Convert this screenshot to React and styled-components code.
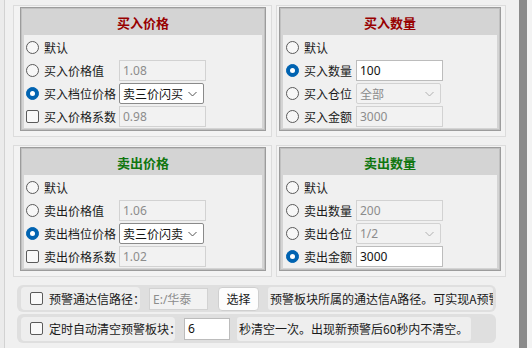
import React from 'react'
import styled, { createGlobalStyle } from 'styled-components'

const Global = createGlobalStyle`
    html, body {
        margin: 0;
        padding: 0;
        background: #f0f0f0;
        overflow: hidden;
    }
    * {
        box-sizing: border-box;
    }
`

const Window = styled.div`
    width: 532px;
    height: 348px;
    display: flex;
    background: #f0f0f0;
    font-family: 'Noto Sans CJK SC', 'Noto Sans', sans-serif;
    font-size: 12px;
    color: #1a1a1a;
`

const Edge = styled.div`
    width: 5px;
    background: #ebebeb;
    border-right: 1px solid #d2d2d2;
`

const Main = styled.div`
    width: 514px;
    padding: 5px 0 0 8px;
    display: flex;
    flex-direction: column;
`

const ScrollBar = styled.div`
    width: 8px;
    background: #8a8a8a;
`

const Tail = styled.div`
    flex: 1;
    background: #f3f3f3;
`

const Grid = styled.div`
    display: grid;
    grid-template-columns: 259px 230px;
    grid-template-rows: 132px 132px;
    column-gap: 4px;
    row-gap: 8px;
`

const Cell = styled.div`
    background: #f3f3f3;
    border: 1px solid #dcdcdc;
    padding: ${(p) => (p.$right ? '1px 4px 5px 2px' : '1px 5px 5px 6px')};
    display: flex;
`

const Group = styled.div`
    flex: 1;
    display: flex;
    flex-direction: column;
    background: #d4d4d4;
    border: 1px solid #9c9c9c;
    box-shadow: inset 0 0 0 1px #c0c0c0;
    padding: 1px;
`

const Header = styled.div`
    height: 26px;
    display: flex;
    align-items: center;
    justify-content: center;
    font-size: 13px;
    font-weight: bold;
    color: ${(p) => (p.$sell ? '#0f760f' : '#980000')};
`

const Content = styled.div`
    flex: 1;
    margin: 0 2px 1px 2px;
    background: #f0f0f0;
    padding-top: 1px;
    display: flex;
    flex-direction: column;
`

const Row = styled.div`
    height: 23px;
    display: flex;
    align-items: center;
    padding-left: ${(p) => (p.$right ? '3px' : '2px')};
`

const Radio = styled.span`
    width: 13px;
    height: 13px;
    border-radius: 50%;
    flex: none;
    border: 1px solid ${(p) => (p.$checked ? '#0063b1' : '#5a5a5a')};
    background: ${(p) => (p.$checked ? '#0063b1' : '#f7f7f7')};
    display: flex;
    align-items: center;
    justify-content: center;
    &::after {
        content: '';
        display: ${(p) => (p.$checked ? 'block' : 'none')};
        width: 5px;
        height: 5px;
        border-radius: 50%;
        background: #fff;
    }
`

const Check = styled.span`
    width: 13px;
    height: 13px;
    flex: none;
    border: 1px solid #5a5a5a;
    border-radius: 2px;
    background: #f9f9f9;
`

const Label = styled.span`
    margin-left: 5px;
    width: ${(p) => p.$w}px;
    white-space: nowrap;
`

const Field = styled.div`
    width: ${(p) => p.$w || 87}px;
    height: ${(p) => p.$h || 21}px;
    border: 1px solid ${(p) => (p.$disabled ? '#d2d2d2' : '#bcbcbc')};
    background: ${(p) => (p.$disabled ? '#f2f2f2' : '#ffffff')};
    color: ${(p) => (p.$disabled ? '#8c8c8c' : '#111')};
    display: flex;
    align-items: center;
    padding-left: 3px;
    font-family: 'Noto Sans', 'Noto Sans CJK SC', sans-serif;
    font-size: 12px;
`

const Select = styled.div`
    width: ${(p) => p.$w}px;
    height: 21px;
    border: 1px solid ${(p) => (p.$disabled ? '#d2d2d2' : '#8a8a8a')};
    border-radius: 2px;
    background: ${(p) => (p.$disabled ? '#f2f2f2' : '#ffffff')};
    color: ${(p) => (p.$disabled ? '#8c8c8c' : '#111')};
    display: flex;
    align-items: center;
    justify-content: space-between;
    padding: 0 6px 0 3px;
    font-family: 'Noto Sans', 'Noto Sans CJK SC', sans-serif;
`

const Chevron = ({ disabled }) => (
    <svg width="9" height="6" viewBox="0 0 9 6">
        <path
            d="M0.5 1 L4.5 5 L8.5 1"
            fill="none"
            stroke={disabled ? '#b0b0b0' : '#555'}
            strokeWidth="1"
        />
    </svg>
)

const Bottom = styled.div`
    margin: 8px 0 0 4px;
    width: 479px;
    display: flex;
    flex-direction: column;
    gap: 2px;
`

const OptionRow = styled.div`
    height: ${(p) => p.$h}px;
    background: #dfdfdf;
    border-radius: 6px;
    display: flex;
    align-items: center;
    padding-left: 4px;
    gap: ${(p) => p.$gap || 9}px;
    overflow: hidden;
`

const OptionLabel = styled.div`
    width: ${(p) => p.$w}px;
    height: ${(p) => p.$h}px;
    background: #eeeeee;
    border-radius: 4px;
    display: flex;
    align-items: center;
    padding-left: 3px;
    white-space: nowrap;
    span {
        margin-left: 6px;
    }
`

const Button = styled.div`
    width: 41px;
    height: 24px;
    margin-left: 1px;
    background: #fdfdfd;
    border: 1px solid #cfcfcf;
    border-radius: 4px;
    display: flex;
    align-items: center;
    justify-content: center;
`

const Note = styled.div`
    width: ${(p) => p.$w}px;
    height: ${(p) => p.$h}px;
    margin-left: ${(p) => p.$shift || 0}px;
    background: #eeeeee;
    border-radius: 3px;
    display: flex;
    align-items: center;
    padding-left: 2px;
    white-space: nowrap;
    overflow: hidden;
`

const Panel = ({ title, sell, right, labelW, rows }) => (
    <Cell $right={right}>
        <Group>
            <Header $sell={sell}>{title}</Header>
            <Content>
                {rows.map((r) => (
                    <Row key={r.label} $right={right}>
                        {r.check ? <Check /> : <Radio $checked={r.checked} />}
                        <Label $w={labelW}>{r.label}</Label>
                        {r.field !== undefined && (
                            <Field $disabled={r.disabled}>{r.field}</Field>
                        )}
                        {r.select !== undefined && (
                            <Select $w={r.selW} $disabled={r.disabled}>
                                {r.select}
                                <Chevron disabled={r.disabled} />
                            </Select>
                        )}
                    </Row>
                ))}
            </Content>
        </Group>
    </Cell>
)

const App = () => {
    return (
        <>
            <Global />
            <Window>
                <Edge />
                <Main>
                    <Grid>
                        <Panel
                            title="买入价格"
                            labelW={75}
                            rows={[
                                { label: '默认' },
                                { label: '买入价格值', field: '1.08', disabled: true },
                                { label: '买入档位价格', checked: true, select: '卖三价闪买', selW: 85 },
                                { label: '买入价格系数', check: true, field: '0.98', disabled: true }
                            ]}
                        />
                        <Panel
                            title="买入数量"
                            right
                            labelW={52}
                            rows={[
                                { label: '默认' },
                                { label: '买入数量', checked: true, field: '100' },
                                { label: '买入仓位', select: '全部', selW: 85, disabled: true },
                                { label: '买入金额', field: '3000', disabled: true }
                            ]}
                        />
                        <Panel
                            title="卖出价格"
                            sell
                            labelW={75}
                            rows={[
                                { label: '默认' },
                                { label: '卖出价格值', field: '1.06', disabled: true },
                                { label: '卖出档位价格', checked: true, select: '卖三价闪卖', selW: 85 },
                                { label: '卖出价格系数', check: true, field: '1.02', disabled: true }
                            ]}
                        />
                        <Panel
                            title="卖出数量"
                            sell
                            right
                            labelW={52}
                            rows={[
                                { label: '默认' },
                                { label: '卖出数量', field: '200', disabled: true },
                                { label: '卖出仓位', select: '1/2', selW: 85, disabled: true },
                                { label: '卖出金额', checked: true, field: '3000' }
                            ]}
                        />
                    </Grid>
                    <Bottom>
                        <OptionRow $h={27}>
                            <OptionLabel $w={119} $h={23}>
                                <Check />
                                <span>预警通达信路径：</span>
                            </OptionLabel>
                            <Field $w={59} $h={22} $disabled>
                                E:/华泰
                            </Field>
                            <Button>选择</Button>
                            <Note $w={225} $h={23}>
                                预警板块所属的通达信A路径。可实现A预警
                            </Note>
                        </OptionRow>
                        <OptionRow $h={29}>
                            <OptionLabel $w={154} $h={24}>
                                <Check />
                                <span>定时自动清空预警板块：</span>
                            </OptionLabel>
                            <Field $w={46} $h={22}>
                                6
                            </Field>
                            <Note $w={234} $h={24} $shift={-2}>
                                秒清空一次。出现新预警后60秒内不清空。
                            </Note>
                        </OptionRow>
                    </Bottom>
                </Main>
                <ScrollBar />
                <Tail />
            </Window>
        </>
    )
}

export default App
